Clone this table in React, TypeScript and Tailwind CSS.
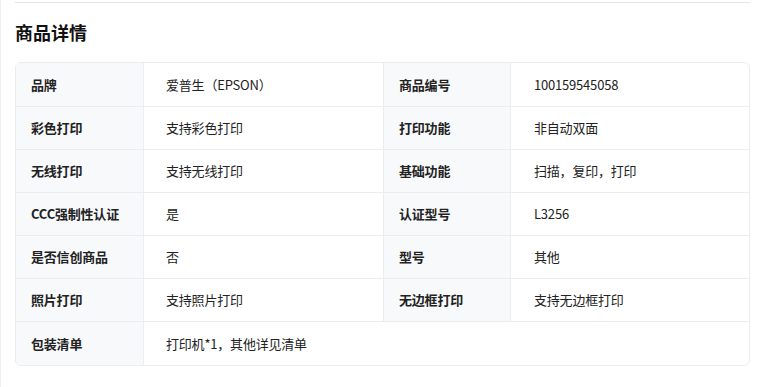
const rows: [string, string, string?, string?][] = [
  ['品牌', '爱普生（EPSON）', '商品编号', '100159545058'],
  ['彩色打印', '支持彩色打印', '打印功能', '非自动双面'],
  ['无线打印', '支持无线打印', '基础功能', '扫描，复印，打印'],
  ['CCC强制性认证', '是', '认证型号', 'L3256'],
  ['是否信创商品', '否', '型号', '其他'],
  ['照片打印', '支持照片打印', '无边框打印', '支持无边框打印'],
  ['包装清单', '打印机*1，其他详见清单'],
];

export default function App() {
  return (
    <div
      className="w-[766px] h-[387px] bg-white border-l border-[#f0f0f0] pl-[14px] pr-[16px] pt-[2px] text-[#222]"
      style={{ fontFamily: '"Noto Sans CJK SC", "Noto Sans", sans-serif' }}
    >
      <div className="border-t border-[#e6e6e6]">
        <h2 className="mt-[15px] text-[18px] leading-[28px] font-bold text-[#111]">商品详情</h2>
        <div className="mt-[16px] border border-[#ebedf0] rounded-md overflow-hidden grid grid-cols-[128px_239px_128px_1fr] text-[13px] tracking-[-0.2px]">
          {rows.map(([l1, v1, l2, v2], i) => {
            const bt = i > 0 ? 'border-t border-[#ebedf0]' : '';
            if (l2 === undefined) {
              return (
                <div key={i} className="contents">
                  <div className={`bg-[#f8f9fb] border-r border-[#ebedf0] pl-[15px] h-[44px] flex items-center font-bold ${bt}`}>
                    {l1}
                  </div>
                  <div className={`col-span-3 pl-[22px] h-[44px] flex items-center ${bt}`}>{v1}</div>
                </div>
              );
            }
            return (
              <div key={i} className="contents">
                <div className={`bg-[#f8f9fb] border-r border-[#ebedf0] pl-[15px] h-[43px] flex items-center font-bold ${bt}`}>
                  {l1}
                </div>
                <div className={`pl-[22px] h-[43px] flex items-center ${bt}`}>{v1}</div>
                <div className={`bg-[#f8f9fb] border-r border-l border-[#ebedf0] pl-[15px] h-[43px] flex items-center font-bold ${bt}`}>
                  {l2}
                </div>
                <div className={`pl-[23px] h-[43px] flex items-center ${bt}`}>{v2}</div>
              </div>
            );
          })}
        </div>
      </div>
    </div>
  );
}
